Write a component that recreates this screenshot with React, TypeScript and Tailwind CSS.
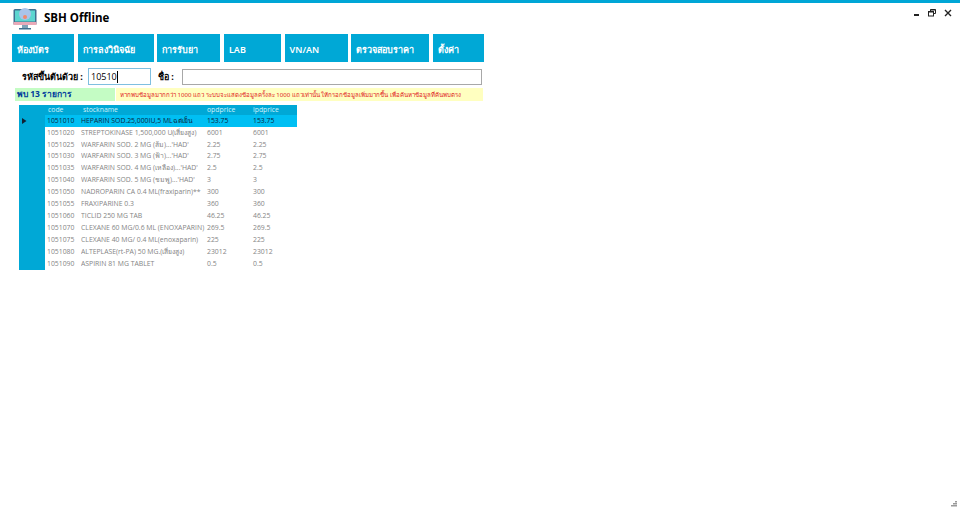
const menus = [
    { label: "ห้องบัตร", width: "w-[62px]" },
    { label: "การลงวินิจฉัย", width: "w-[76px]" },
    { label: "การรับยา", width: "w-[63px]" },
    { label: "LAB", width: "w-[57px]" },
    { label: "VN/AN", width: "w-[63px]" },
    { label: "ตรวจสอบราคา", width: "w-[78px]" },
    { label: "ตั้งค่า", width: "w-[51px]" },
];

const rows = [
    ["1051010", "HEPARIN SOD.25,000IU,5 MLฉต่เย็น", "153.75", "153.75"],
    ["1051020", "STREPTOKINASE 1,500,000 U(เสี่ยงสูง)", "6001", "6001"],
    ["1051025", "WARFARIN SOD. 2 MG (ส้ม)...'HAD'", "2.25", "2.25"],
    ["1051030", "WARFARIN SOD. 3 MG (ฟ้า)...'HAD'", "2.75", "2.75"],
    ["1051035", "WARFARIN SOD. 4 MG (เหลือง)...'HAD'", "2.5", "2.5"],
    ["1051040", "WARFARIN SOD. 5 MG (ชมพู)...'HAD'", "3", "3"],
    ["1051050", "NADROPARIN CA 0.4 ML(fraxiparin)**", "300", "300"],
    ["1051055", "FRAXIPARINE 0.3", "360", "360"],
    ["1051060", "TICLID 250 MG TAB", "46.25", "46.25"],
    ["1051070", "CLEXANE 60 MG/0.6 ML (ENOXAPARIN)", "269.5", "269.5"],
    ["1051075", "CLEXANE 40 MG/ 0.4 ML(enoxaparin)", "225", "225"],
    ["1051080", "ALTEPLASE(rt-PA) 50 MG.(เสี่ยงสูง)", "23012", "23012"],
    ["1051090", "ASPIRIN 81 MG TABLET", "0.5", "0.5"],
];

function MonitorIcon() {
    return (
        <svg width="24" height="24" viewBox="0 0 24 24">
            <rect x="0.5" y="2" width="23" height="16" rx="1.5" fill="#3f6f8f" />
            <rect x="2" y="3.5" width="20" height="11" fill="#5cd6d0" />
            <rect x="0.5" y="15" width="23" height="3" fill="#e8a9b8" />
            <circle cx="12" cy="7" r="6" fill="#a9c4ea" />
            <circle cx="12" cy="10" r="2" fill="#f08a6c" />
            <rect x="9" y="18" width="6" height="3" fill="#7fa3b8" />
            <rect x="6" y="21" width="12" height="1.5" fill="#3f6f8f" />
        </svg>
    );
}

export default function App() {
    return (
        <div className="flex h-[509px] w-[960px] flex-col overflow-hidden bg-white font-['Open_Sans','Noto_Sans',sans-serif]">
            <div className="h-[3px] bg-[#00a6d6]" />

            <div className="flex h-[31px] items-center pl-[13px] pr-2">
                <MonitorIcon />
                <span className="mb-[2px] ml-[7px] text-[11.5px] font-bold text-black">SBH Offline</span>
                <div className="ml-auto mb-3 flex items-center gap-[8px] text-[#222]">
                    <svg width="6" height="6" viewBox="0 0 6 6"><rect x="0" y="4" width="5" height="2" fill="currentColor" /></svg>
                    <svg width="8" height="8" viewBox="0 0 8 8" fill="none" stroke="currentColor"><path d="M2.5 2V.5h5v4H6" /><rect x=".5" y="2.5" width="5" height="4.5" /><path d="M.5 3h5M2.5 1h5" /></svg>
                    <svg width="8" height="8" viewBox="0 0 8 8" stroke="currentColor" strokeWidth="1.4"><path d="M1 1l6 6M7 1L1 7" /></svg>
                </div>
            </div>

            <div className="ml-3 flex h-7 gap-[3.65px]">
                {menus.map((menu) => (
                    <div key={menu.label} className={`${menu.width} flex items-center bg-[#00a8d6] pl-[5px] pt-[4px] font-['Noto_Sans',sans-serif] text-[9px] font-semibold text-white`}>
                        {menu.label}
                    </div>
                ))}
            </div>

            <div className="mt-1.5 flex h-[17px] items-center font-['Noto_Sans',sans-serif] text-[9px] font-bold text-black">
                <span className="ml-[22px] w-[66px]">รหัสขึ้นต้นด้วย :</span>
                <div className="flex h-[17px] w-[63px] items-center border border-[#7fbfe0] pl-[2px] font-['Open_Sans',sans-serif] text-[9px] font-normal">
                    10510<span className="h-3 w-px bg-black" />
                </div>
                <span className="ml-[7px] w-6">ชื่อ :</span>
                <div className="h-4 w-[300px] border border-[#a8a8a8]" />
            </div>

            <div className="ml-[15px] mt-[3px] flex h-[13px] gap-px">
                <div className="flex w-[100px] items-center bg-[#c4fcc4] pl-[2px] font-['Noto_Sans',sans-serif] text-[8.5px] font-bold text-[#003c9c]">พบ 13 รายการ</div>
                <div className="flex w-[367px] items-center overflow-hidden whitespace-nowrap bg-[#ffffc0] pl-1 font-['Noto_Sans',sans-serif] text-[6.1px] text-[#e0201c]">
                    หากพบข้อมูลมากกว่า 1000 แถว ระบบจะแสดงข้อมูลครั้งละ 1000 แถวเท่านั้น ให้กรอกข้อมูลเพิ่มมากขึ้น เพื่อค้นหาข้อมูลที่ค้นพบตรง
                </div>
            </div>

            <div className="ml-[19px] mt-[4px] flex w-[278px] flex-col font-['Open_Sans','Noto_Sans',sans-serif] text-[6.85px]">
                <div className="grid h-[10px] grid-cols-[27px_36px_125px_46px_44px] items-center bg-[#00a8d6] text-[#d4f2fa]">
                    <span />
                    <span className="pl-[2px]">code</span>
                    <span className="pl-[1px]">stockname</span>
                    <span>opdprice</span>
                    <span>ipdprice</span>
                </div>
                {rows.map((row, i) => (
                    <div
                        key={row[0]}
                        className={`grid h-[11.9px] grid-cols-[26px_36px_126px_46px_44px] items-center whitespace-nowrap ${i === 0 ? "bg-[#00bff3] text-[#0a2540]" : "text-[#858585]"}`}
                    >
                        <span className="flex h-full items-center bg-[#00a8d6] pl-[3px]">
                            {i === 0 && (
                                <svg width="5" height="6" viewBox="0 0 5 6"><path d="M0 0l4.5 3L0 6z" fill="#123" /></svg>
                            )}
                        </span>
                        <span className="pl-[2px]">{row[0]}</span>
                        <span className="overflow-hidden">{row[1]}</span>
                        <span>{row[2]}</span>
                        <span>{row[3]}</span>
                    </div>
                ))}
            </div>

            <div className="mt-auto mb-[2px] mr-[3px] self-end">
                <svg width="6" height="6" viewBox="0 0 6 6" fill="#9a9a9a">
                    <rect x="4" y="0" width="2" height="1.5" />
                    <rect x="2" y="2" width="2" height="1.5" />
                    <rect x="4" y="2" width="2" height="1.5" />
                    <rect x="0" y="4" width="2" height="1.5" />
                    <rect x="2" y="4" width="2" height="1.5" />
                    <rect x="4" y="4" width="2" height="1.5" />
                </svg>
            </div>
        </div>
    );
}
